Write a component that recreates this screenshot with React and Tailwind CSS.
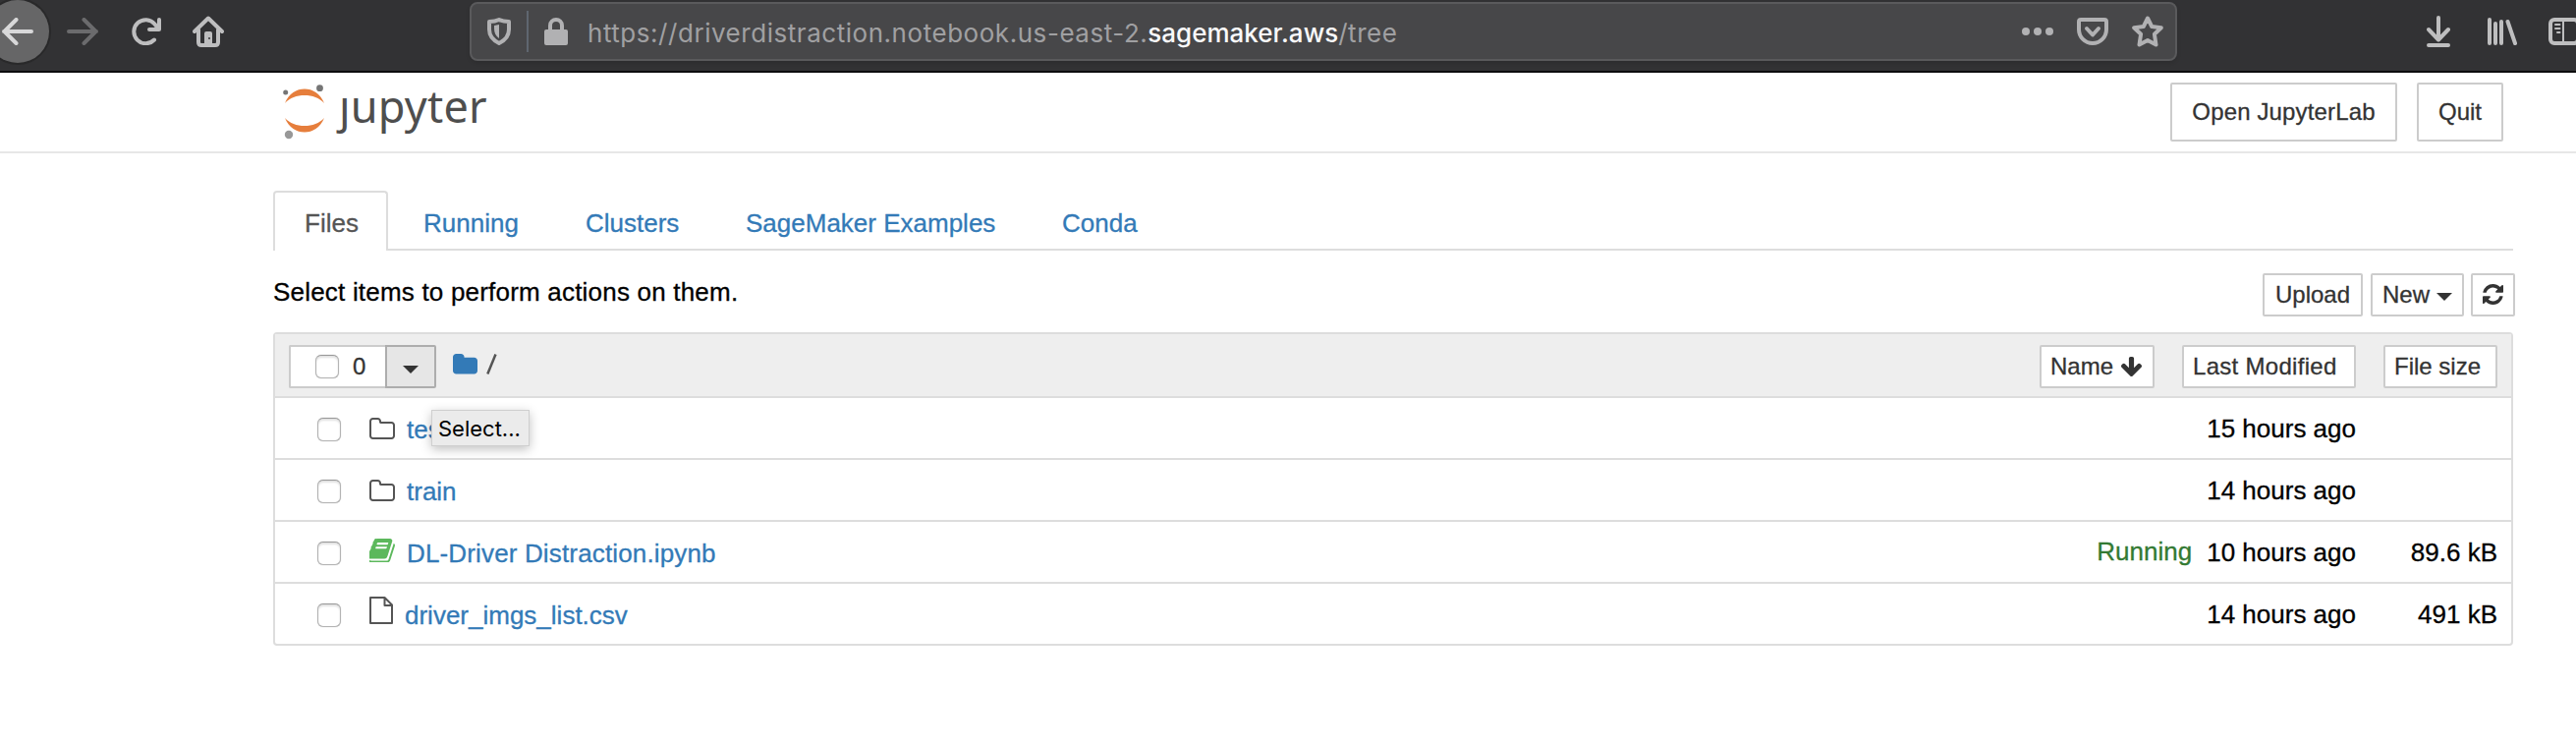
import React from "react";

const FOLDER_O =
  "M1600 1312v-704q0-40-28-68t-68-28h-704q-40 0-68-28t-28-68v-64q0-40-28-68t-68-28h-320q-40 0-68 28t-28 68v960q0 40 28 68t68 28h1216q40 0 68-28t28-68zm128-704v704q0 92-66 158t-158 66h-1216q-92 0-158-66t-66-158v-960q0-92 66-158t158-66h320q92 0 158 66t66 158v32h672q92 0 158 66t66 158z";
const FOLDER =
  "M1728 608v704q0 92-66 158t-158 66h-1216q-92 0-158-66t-66-158v-960q0-92 66-158t158-66h320q92 0 158 66t66 158v32h672q92 0 158 66t66 158z";
const BOOK =
  "M1639 478q40 57 18 129l-275 906q-19 64-76.5 107.5t-122.5 43.5h-923q-77 0-148.5-53.5t-99.5-131.5q-24-67-2-127 0-4 3-27t4-37q1-8-3-21.5t-3-19.5q2-11 8-21t16.5-23.5 16.5-23.5q23-38 45-91.5t30-91.5q3-10 .5-30t-.5-28q3-11 17-28t17-23q21-36 42-92t25-90q1-9-2.5-32t.5-28q4-13 22-30.5t22-22.5q19-26 42.5-84.5t27.5-96.5q1-8-3-25.5t-2-26.5q2-8 9-18t18-23 17-21q8-12 16.5-30.5t15-35 16-36 19.5-32 26.5-23.5 36-11.5 47.5 5.5l-1 3q38-9 51-9h761q74 0 114 56t18 130l-274 906q-36 119-71.5 153.5t-128.5 34.5h-869q-27 0-38 15-11 16-1 43 24 70 144 70h923q29 0 56-15.5t35-41.5l300-987q7-22 5-57 38 15 59 43zm-1064 2q-4 13 2 22.5t20 9.5h608q13 0 25.5-9.5t16.5-22.5l21-64q4-13-2-22.5t-20-9.5h-608q-13 0-25.5 9.5t-16.5 22.5zm-83 256q-4 13 2 22.5t20 9.5h608q13 0 25.5-9.5t16.5-22.5l21-64q4-13-2-22.5t-20-9.5h-608q-13 0-25.5 9.5t-16.5 22.5z";
const REFRESH =
  "M1639 1056q0 5-1 7-64 268-268 434.5t-478 166.5q-146 0-282.5-55t-243.5-157l-129 129q-19 19-45 19t-45-19-19-45v-448q0-26 19-45t45-19h448q26 0 45 19t19 45-19 45l-137 137q71 66 161 102t187 36q134 0 250-65t186-179q11-17 53-117 8-23 30-23h192q13 0 22.5 9.5t9.5 22.5zm25-800v448q0 26-19 45t-45 19h-448q-26 0-45-19t-19-45 19-45l138-138q-148-137-349-137-134 0-250 65t-186 179q-11 17-53 117-8 23-30 23h-199q-13 0-22.5-9.5t-9.5-22.5v-7q65-268 270-434.5t480-166.5q146 0 284 55.5t245 156.5l130-129q19-19 45-19t45 19 19 45z";
const ARROW_DOWN =
  "M1675 832q0 53-37 90l-651 652q-39 37-91 37-53 0-90-37l-651-652q-38-36-38-90 0-53 38-91l74-75q39-37 91-37 53 0 90 37l294 294v-704q0-52 38-90t90-38h128q52 0 90 38t38 90v704l294-294q37-37 90-37 52 0 91 37l75 75q37 39 37 91z";

// Outlined toolbar icon, drawn with rounded 4px strokes
function Line({ w, h, className, children }) {
  return (
    <svg
      width={w}
      height={h}
      viewBox={`0 0 ${w} ${h}`}
      fill="none"
      stroke="currentColor"
      strokeWidth="4"
      strokeLinecap="round"
      strokeLinejoin="round"
      className={`shrink-0 ${className || ""}`}
    >
      {children}
    </svg>
  );
}

function Glyph({ w, h, box, d, className }) {
  return (
    <svg width={w} height={h} viewBox={box} preserveAspectRatio="none" fill="currentColor" className={`shrink-0 ${className || ""}`}>
      <path d={d} />
    </svg>
  );
}

function Caret({ className }) {
  return (
    <svg width="16" height="8" viewBox="0 0 16 8" fill="#333" className={`shrink-0 ${className || ""}`}>
      <path d="M0 0h16L8 8z" />
    </svg>
  );
}

function Button({ className, children }) {
  return (
    <button className={`flex shrink-0 items-center whitespace-nowrap rounded-[2px] border-2 border-[#ccc] bg-white text-[24px] leading-[34px] text-[#333] [-webkit-text-stroke:0.3px] ${className}`}>
      {children}
    </button>
  );
}

function Checkbox({ className }) {
  return (
    <span
      className={`size-6 shrink-0 rounded-[6px] border border-[#b4b4b4] border-t-[#999] bg-white shadow-[inset_0_2px_2px_rgba(0,0,0,0.12),0_0_1px_rgba(0,0,0,0.3)] ${className || ""}`}
    />
  );
}

function BrowserBar() {
  return (
    <div className="flex h-[74px] items-center overflow-hidden border-b-2 border-[#0c0c0d] bg-[#323234] pb-2 text-[#bebebf]">
      <div className="-ml-[14px] flex size-16 shrink-0 items-center justify-center rounded-full bg-[#666667] text-[#d8d8d9] shadow-[0_0_0_2px_#29292a]">
        <Line w={32} h={28}>
          <path d="M30 14H2M14.500 2L2.500 14l12 12" />
        </Line>
      </div>
      <Line w={32} h={28} className="ml-[18px] text-[#6b6b6d]">
        <path d="M2 14h28M17.500 2l12 12-12 12" />
      </Line>
      <Line w={30} h={28} className="ml-[34px]">
        <path d="M23 22.500A12 12 0 1 1 23.500 6.500L27 11M28 2v10H18" />
      </Line>
      <Line w={32} h={32} className="ml-8">
        <path d="M2 16L16 2.500 30 16M6 14v13q0 3 3 3h14q3 0 3-3V14" />
        <path d="M12 29V18q0-2 2-2h4q2 0 2 2v11z" fill="currentColor" stroke="none" />
        <circle cx="17" cy="23" r="1" fill="#323234" stroke="none" />
      </Line>
      <div className="ml-[250px] flex h-[60px] w-[1738px] shrink-0 items-center rounded-[8px] border-2 border-[#5a5a5c] bg-[#474749] pl-4 pr-3 text-[#b1b1b3] shadow-[0_2px_4px_rgba(0,0,0,0.12)]">
        <Line w={24} h={28}>
          <path d="M12 2C9 3.500 5 4 2 4v8c0 7 4 11 10 14 6-3 10-7 10-14V4C19 4 15 3.500 12 2z" />
          <path d="M12 7v14C8.500 18.500 7 15.500 7 11V8z" fill="currentColor" stroke="none" />
        </Line>
        <span className="ml-4 h-[42px] w-0.5 bg-[#5f6670]" />
        <Line w={24} h={28} className="ml-4">
          <path d="M6 13V8a6 6 0 0 1 12 0v5" />
          <rect x="0" y="12" width="24" height="16" rx="2" fill="currentColor" stroke="none" />
        </Line>
        <span className="ml-5 mt-[3px] grow whitespace-nowrap font-['Inter',sans-serif] text-[26px] leading-[36px] tracking-[0.54px] text-[#a0a0a2]">
          https://driverdistraction.notebook.us-east-2.
          <span className="font-medium tracking-[0px] text-[#f9f9fa]">sagemaker.aws</span>/tree
        </span>
        <svg width="32" height="8" viewBox="0 0 32 8" fill="currentColor" className="shrink-0">
          <circle cx="4" cy="4" r="4" />
          <circle cx="16" cy="4" r="4" />
          <circle cx="28" cy="4" r="4" />
        </svg>
        <Line w={32} h={28} className="ml-6">
          <path d="M4 2h24q2 0 2 2v8a14 14 0 0 1-28 0V4q0-2 2-2zM10 11l6 6.500 6-6.500" />
        </Line>
        <Line w={32} h={32} className="ml-6">
          <path d="M16 2.500l4.200 8.500 9.600 1.200-6.900 6.600 1.600 10.700-8.500-4.600-8.500 4.600 1.600-10.700L2.200 12.200l9.600-1.200z" />
        </Line>
      </div>
      <Line w={24} h={32} className="ml-[254px]">
        <path d="M12 2v22M2 14l10 10.500L22 14M2 30h20" />
      </Line>
      <Line w={30} h={28} className="ml-[38px]">
        <path d="M2 2v24M8 6v20M14 4v22M20.500 4L28 26" />
      </Line>
      <Line w={32} h={28} className="ml-8">
        <rect x="2" y="2" width="28" height="24" rx="4" />
        <path d="M15 3v22" strokeWidth="2" />
        <path d="M7 7h4.500M7 11h4.500M9 15h2.500" strokeWidth="2" />
      </Line>
    </div>
  );
}

function Header() {
  return (
    <header className="flex h-[82px] items-start border-b-2 border-[#e7e7e7] pl-[286px] pr-[74px] pt-[10px]">
      <svg width="48" height="60" viewBox="0 -4 48 60">
        <path fill="#e67e3c" d="M4 17C8 7 16 2.500 24 2.500S40 7 44 17C39 11.500 32 9 24 9S9 11.500 4 17z" />
        <path fill="#e67e3c" d="M4 32C9 37.500 16 40 24 40s15-2.500 20-8C40 42 32 46.500 24 46.500S8 42 4 32z" />
        <circle cx="4.700" cy="6" r="2.500" fill="#757575" />
        <circle cx="39.500" cy="1.700" r="3.400" fill="#757575" />
        <circle cx="8" cy="49" r="4.200" fill="#989898" />
      </svg>
      <span className="-mt-1.5 ml-[11px] grow font-['Noto_Sans',sans-serif] text-[45px] leading-[60px] tracking-[0.2px] text-[#4e4e4e]">ȷupyter</span>
      <Button className="h-[60px] w-[231px] justify-center tracking-[0.15px]">Open JupyterLab</Button>
      <Button className="ml-5 h-[60px] w-[88px] justify-center">Quit</Button>
    </header>
  );
}

function Tabs() {
  return (
    <nav className="flex h-[61px] border-b-2 border-[#ddd] text-[26px] leading-[36px] text-[#337ab7]">
      <a className="-mb-0.5 mr-1 w-[117px] rounded-t-[4px] border-2 border-b-0 border-[#ddd] bg-white pl-[30px] pt-[13px] text-[#555]">Files</a>
      <a className="w-[165px] pl-8 pt-[15px]">Running</a>
      <a className="w-[163px] pl-8 pt-[15px]">Clusters</a>
      <a className="w-[322px] pl-8 pt-[15px]">SageMaker Examples</a>
      <a className="pl-8 pt-[15px]">Conda</a>
    </nav>
  );
}

const folderIcon = <Glyph w={26} h={22} box="64 128 1664 1408" d={FOLDER_O} className="text-[#555]" />;

const rows = [
  { name: "test", time: "15 hours ago", icon: folderIcon, gap: "ml-3" },
  { name: "train", time: "14 hours ago", icon: folderIcon, gap: "ml-3" },
  {
    name: "DL-Driver Distraction.ipynb",
    time: "10 hours ago",
    size: "89.6 kB",
    running: true,
    gap: "ml-3 tracking-[0.15px]",
    icon: <Glyph w={26} h={24.5} box="127 128 1540 1536" d={BOOK} className="mb-[3px] text-[#5cb85c]" />,
  },
  {
    name: "driver_imgs_list.csv",
    time: "14 hours ago",
    size: "491 kB",
    gap: "ml-[10px]",
    icon: (
      <svg width="24" height="28" viewBox="0 0 24 28" fill="none" stroke="#555" strokeWidth="2" strokeLinejoin="round" className="mb-[7px] shrink-0">
        <path d="M1 1h14.500l7.500 7.500V27H1zM15.500 1v8H23" />
      </svg>
    ),
  },
];

function FileRow({ row, last }) {
  return (
    <div className={`flex items-center pl-[43px] pr-[14px] text-[26px] leading-[36px] ${last ? "h-[61px]" : "h-[63px] border-b-2 border-[#ddd]"}`}>
      <Checkbox className="mt-[3px]" />
      <span className="ml-[29px] flex w-[26px] shrink-0">{row.icon}</span>
      <a className={`mt-[3px] grow text-[#337ab7] ${row.gap}`}>{row.name}</a>
      {row.running && <span className="mb-px mr-[15px] text-[#337a33]">Running</span>}
      <span>{row.time}</span>
      <span className="w-36 text-right">{row.size}</span>
    </div>
  );
}

export default function App() {
  return (
    <div className="h-[758px] w-[2622px] overflow-hidden bg-white font-['Liberation_Sans',Arial,sans-serif] text-black">
      <BrowserBar />
      <Header />
      <main className="ml-[278px] w-[2280px] pt-[38px] [-webkit-text-stroke:0.3px]">
        <Tabs />
        <div className="-mr-0.5 flex h-[83px] items-start pt-[23px]">
          <span className="mt-px grow text-[26px] leading-[36px] tracking-[0.2px]">Select items to perform actions on them.</span>
          <Button className="mr-2 h-11 w-[102px] justify-center">Upload</Button>
          <Button className="mr-[7px] h-11 w-[95px] pl-[10px]">
            New
            <Caret className="ml-[7px] mt-1" />
          </Button>
          <Button className="h-11 w-[45px] justify-center">
            <Glyph w={21} h={21} box="128 128 1536 1536" d={REFRESH} className="mb-px" />
          </Button>
        </div>
        <section className="relative rounded-[4px] border-2 border-[#ddd]">
          <div className="flex h-[65px] items-start border-b-2 border-[#ddd] bg-[#eee] pl-[14px] pr-[14px] pt-[11px]">
            <div className="flex h-11 w-[98px] items-center rounded-l-[2px] border-2 border-r-0 border-[#ccc] bg-white pl-[25px]">
              <Checkbox />
              <span className="ml-[14px] text-[24px] leading-[34px] text-[#333]">0</span>
            </div>
            <div className="flex h-11 w-[52px] items-center justify-center rounded-r-[2px] border-2 border-[#adadad] bg-[#e6e6e6]">
              <Caret className="mt-[6px]" />
            </div>
            <Glyph w={25} h={20.5} box="64 128 1664 1408" d={FOLDER} className="ml-[17px] mt-[9px] text-[#337ab7]" />
            <svg width="11" height="21" viewBox="0 0 11 21" className="ml-[9px] mt-[9px]" stroke="#555" strokeWidth="2.500">
              <path d="M1.300 20.500L9.500 0.500" />
            </svg>
            <div className="grow" />
            <Button className="h-11 w-[117px] pl-[9px]">
              Name
              <Glyph w={21} h={20} box="117 128 1558 1483" d={ARROW_DOWN} className="ml-2" />
            </Button>
            <Button className="ml-7 h-11 w-[177px] pl-[9px] tracking-[0.3px]">Last Modified</Button>
            <Button className="ml-7 h-11 w-[116px] pl-[9px]">File size</Button>
          </div>
          {rows.map((row, i) => (
            <FileRow key={row.name} row={row} last={i === rows.length - 1} />
          ))}
          <div className="absolute left-[159px] top-[77px] h-[37px] w-[100px] border border-[#cfcfcf] bg-[#ebebeb] pl-[6px] pt-px font-['Inter',sans-serif] text-[22px] leading-[35px] shadow-[0_3px_10px_rgba(0,0,0,0.25)] [-webkit-text-stroke:0px]">
            Select...
          </div>
        </section>
      </main>
    </div>
  );
}
